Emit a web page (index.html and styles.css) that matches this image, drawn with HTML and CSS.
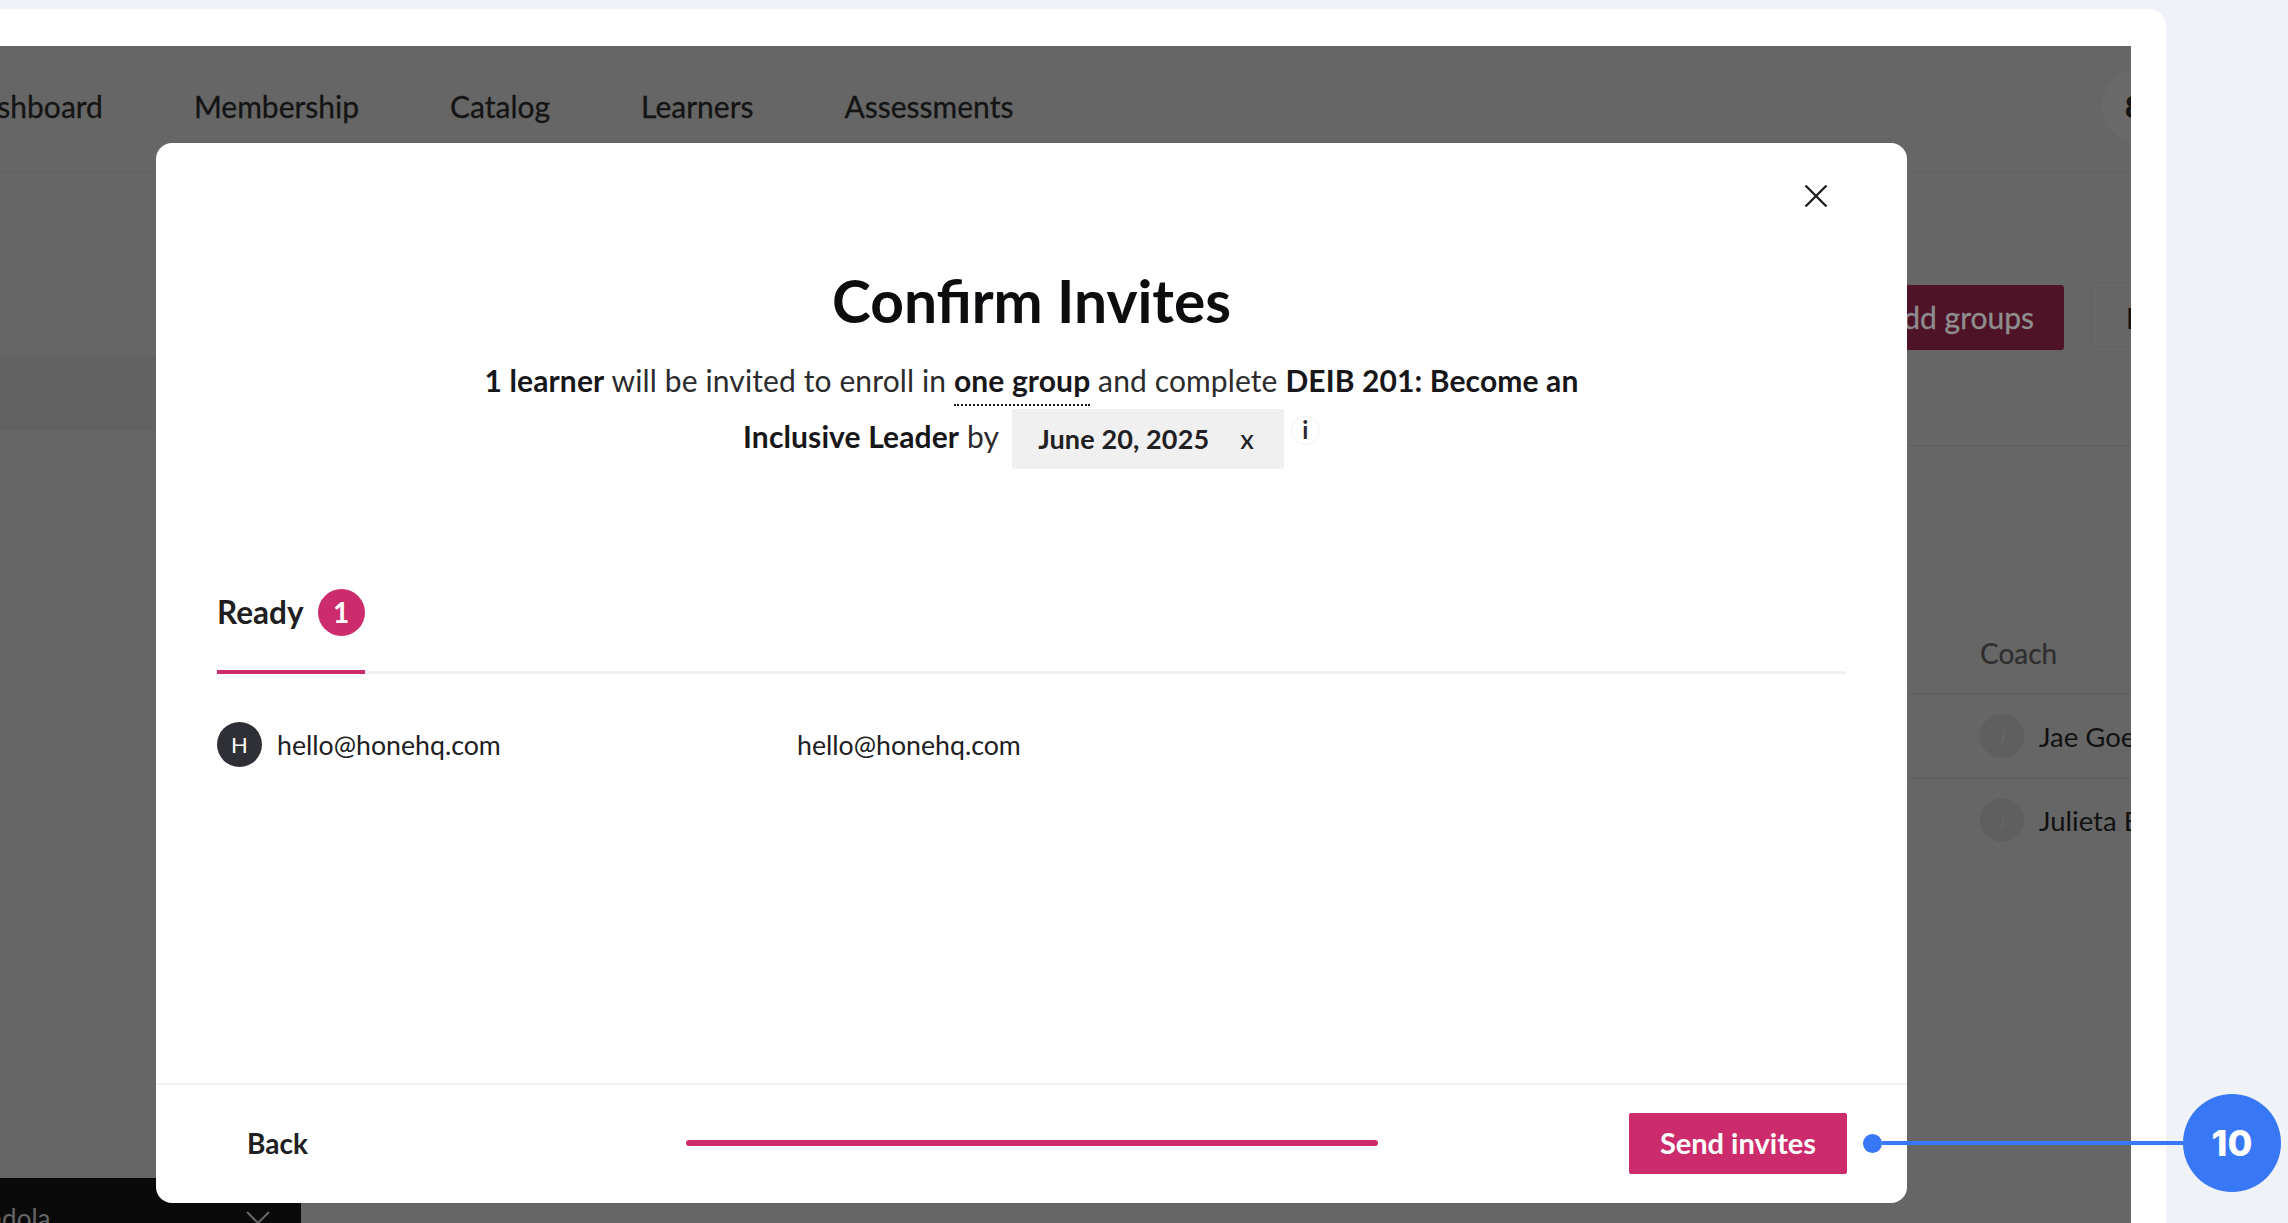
FILE: index.html
```html
<!DOCTYPE html>
<html lang="en">
<head>
    <meta charset="UTF-8">
    <meta name="viewport" content="width=device-width, initial-scale=1.0">
    <title>Confirm Invites</title>
    <link rel="stylesheet" href="styles.css">
</head>
<body>
    <div class="frame">
        <div class="screen">
            <nav class="nav">
                <a class="nav-link">Dashboard</a>
                <a class="nav-link">Membership</a>
                <a class="nav-link">Catalog</a>
                <a class="nav-link">Learners</a>
                <a class="nav-link">Assessments</a>
                <div class="nav-user"><span class="nav-user-mark">8</span></div>
            </nav>
            <div class="page">
                <aside class="sidebar">
                    <div class="sidebar-band"></div>
                    <div class="org-select">
                        <span class="org-name">Gondola</span>
                        <svg class="org-chevron" width="24" height="14" viewBox="0 0 24 14"><path d="M1 1l11 11L23 1" fill="none" stroke="#666" stroke-width="2"/></svg>
                    </div>
                </aside>
                <main class="main">
                    <div class="toolbar">
                        <div class="btn-add">Add groups</div>
                        <div class="btn-more">Export</div>
                    </div>
                    <div class="table">
                        <div class="table-head"><div class="coach-cell coach-title">Coach</div></div>
                        <div class="table-row">
                            <div class="coach-cell"><span class="coach-avatar">J</span>Jae Goetz</div>
                        </div>
                        <div class="table-row no-line">
                            <div class="coach-cell"><span class="coach-avatar">J</span>Julieta Bravo</div>
                        </div>
                    </div>
                </main>
            </div>

            <div class="modal">
                <button class="modal-close">
                    <svg width="24" height="24" viewBox="0 0 24 24"><path d="M1.5 1.5l21 21M22.5 1.5l-21 21" fill="none" stroke="#1f1f22" stroke-width="2.4"/></svg>
                </button>
                <div class="modal-body">
                    <h1 class="modal-title">Confirm Invites</h1>
                    <p class="modal-text">
                        <b>1 learner</b> will be invited to enroll in <b class="dotted">one group</b> and complete <b>DEIB 201: Become an Inclusive Leader</b> by
                        <span class="date-chip">June 20, 2025<span class="date-clear">x</span></span><span class="info-dot">i</span>
                    </p>
                    <div class="tabs">
                        <div class="tab-active">Ready <span class="tab-badge">1</span></div>
                    </div>
                    <div class="invite-row">
                        <div class="invite-name"><span class="invite-avatar">H</span>hello@honehq.com</div>
                        <div>hello@honehq.com</div>
                    </div>
                </div>
                <div class="modal-footer">
                    <div class="back-link">Back</div>
                    <div class="progress"></div>
                    <div class="send-btn">Send invites</div>
                </div>
            </div>
        </div>
    </div>

    <div class="callout">
        <span class="callout-dot"></span>
        <span class="callout-line"></span>
        <span class="callout-num">10</span>
    </div>
</body>
</html>
```

FILE: styles.css
```css
* {
    box-sizing: border-box;
}

html, body {
    height: 100%;
}

body {
    margin: 0;
    overflow: hidden;
    background-color: #eff2f8;
    font-family: Lato, "Open Sans", sans-serif;
    color: #1f1f22;
}

.frame {
    width: 2166px;
    height: 1214px;
    margin-top: 9px;
    padding: 37px 35px 0 0;
    background-color: #fff;
    border-top-right-radius: 18px;
}

.screen {
    position: relative;
    display: flex;
    flex-direction: column;
    height: 100%;
    background-color: #666;
    overflow: hidden;
}

/* top nav */
.nav {
    display: flex;
    align-items: center;
    flex-shrink: 0;
    height: 126px;
    margin-left: -40px;
    padding-bottom: 5px;
    gap: 91px;
    border-bottom: 1px solid #616161;
    font-size: 30px;
    -webkit-text-stroke: 0.3px #141414;
    color: #141414;
}

.nav-user {
    display: flex;
    align-items: center;
    width: 76px;
    height: 76px;
    margin-left: auto;
    margin-right: -47px;
    padding-left: 23px;
    border-radius: 50%;
    background-color: #6a6a6a;
    font-weight: 900;
}

.page {
    display: flex;
    flex: 1;
    min-height: 0;
}

.sidebar {
    display: flex;
    flex-direction: column;
    width: 301px;
    flex-shrink: 0;
    padding-top: 183px;
}

.sidebar-band {
    height: 75px;
    background-color: #626262;
}

.org-select {
    display: flex;
    align-items: center;
    justify-content: space-between;
    height: 80px;
    margin-top: auto;
    margin-bottom: -35px;
    margin-left: -46px;
    padding: 0 31px 0 0;
    background-color: #0a0a0b;
    font-size: 26px;
    color: #666;
}

.main {
    flex: 1;
    min-width: 0;
}

.toolbar {
    display: flex;
    justify-content: flex-end;
    gap: 31px;
    height: 274px;
    margin-right: -64px;
    padding-top: 113px;
    border-bottom: 1px solid #5e5e5e;
}

.btn-add {
    width: 260px;
    height: 65px;
    padding-top: 14px;
    text-align: right;
    padding-right: 30px;
    border-radius: 3px;
    background-color: #4f1328;
    color: #8e8e8e;
    font-size: 30px;
    -webkit-text-stroke: 0.3px #8e8e8e;
}

.btn-more {
    width: 100px;
    height: 65px;
    padding: 15px 0 0 30px;
    border: 1px solid #6b6b6b;
    border-radius: 3px;
    color: #111;
    font-size: 28px;
    font-weight: 500;
}

.table-head {
    display: flex;
    justify-content: flex-end;
    align-items: flex-end;
    height: 249px;
    padding-bottom: 23px;
    border-bottom: 2px solid #616161;
}

.table-row {
    display: flex;
    justify-content: flex-end;
    align-items: center;
    height: 84px;
    border-bottom: 2px solid #616161;
    font-size: 27.5px;
    color: #111;
}

.table-row.no-line {
    height: 82px;
    border-bottom: 0;
}

.coach-cell {
    display: flex;
    align-items: center;
    width: 151px;
    overflow: hidden;
    white-space: nowrap;
}

.coach-title {
    font-size: 28px;
    color: #2e2e2e;
    -webkit-text-stroke: 0.2px #2e2e2e;
}

.coach-avatar {
    display: flex;
    align-items: center;
    justify-content: center;
    flex-shrink: 0;
    width: 44px;
    height: 44px;
    margin-right: 15px;
    border-radius: 50%;
    background-color: #5f5f5f;
    color: #666;
    font-size: 16px;
}

/* modal */
.modal {
    position: absolute;
    left: 156px;
    top: 97px;
    display: flex;
    flex-direction: column;
    width: 1751px;
    height: 1060px;
    border-radius: 16px;
    background-color: #fff;
}

.modal-close {
    position: absolute;
    top: 41px;
    right: 79px;
    width: 24px;
    height: 24px;
    padding: 0;
    border: 0;
    background: none;
}

.modal-close svg {
    display: block;
}

.modal-body {
    flex: 1;
    padding: 120px 61px 0;
}

.modal-title {
    margin: 0;
    font-size: 58.7px;
    line-height: 76px;
    font-weight: 700;
    color: #0d0d0f;
    text-align: center;
}

.modal-text {
    width: 1140px;
    margin: 13px auto 0;
    font-size: 30px;
    line-height: 56px;
    letter-spacing: 0.12px;
    text-align: center;
    color: #2b2b2e;
}

.modal-text b {
    font-weight: 700;
    color: #17171a;
}

.dotted {
    padding-bottom: 6px;
    border-bottom: 2px dotted #17171a;
}

.date-chip {
    display: inline-block;
    height: 60px;
    margin: -3px 0 -1px 6px;
    padding: 0 30px 0 26px;
    border-radius: 3px;
    background-color: #f0f0f0;
    font-size: 27px;
    line-height: 60px;
    font-weight: 700;
    color: #202023;
    vertical-align: middle;
}

.date-clear {
    margin-left: 31px;
    font-weight: 500;
}

.info-dot {
    display: inline-block;
    width: 29px;
    height: 29px;
    margin-left: 7px;
    border: 1px solid #f0f0f0;
    border-radius: 50%;
    font-size: 24px;
    line-height: 25px;
    font-weight: 700;
    text-align: center;
    vertical-align: 9px;
}

.tabs {
    height: 111px;
    margin-top: 95px;
    border-bottom: 3px solid #f0f0f0;
}

.tab-active {
    display: inline-flex;
    align-items: center;
    gap: 14px;
    height: 111px;
    padding-bottom: 9px;
    border-bottom: 4px solid #cc2c6c;
    font-size: 31.5px;
    font-weight: 700;
}

.tab-badge {
    display: flex;
    align-items: center;
    justify-content: center;
    width: 47px;
    height: 47px;
    border-radius: 50%;
    background-color: #cc2c6c;
    color: #fff;
    font-size: 28px;
}

.invite-row {
    display: flex;
    align-items: center;
    height: 45px;
    margin-top: 48px;
    font-size: 26.7px;
    color: #202023;
}

.invite-name {
    display: flex;
    align-items: center;
    gap: 15px;
    width: 580px;
}

.invite-avatar {
    display: flex;
    align-items: center;
    justify-content: center;
    width: 45px;
    height: 45px;
    border-radius: 50%;
    background-color: #2f2f36;
    color: #fff;
    font-size: 22px;
}

.modal-footer {
    display: grid;
    grid-template-columns: 1fr 692px 1fr;
    align-items: center;
    flex-shrink: 0;
    height: 120px;
    padding: 0 60px 2px 61px;
    border-top: 2px solid #f3f3f3;
}

.back-link {
    padding-left: 30px;
    font-size: 28px;
    font-weight: 700;
    color: #202023;
}

.progress {
    height: 6px;
    border-radius: 3px;
    background-color: #cc2c6c;
}

.send-btn {
    justify-self: end;
    width: 218px;
    height: 61px;
    border-radius: 2px;
    background-color: #cc2c6c;
    color: #fff;
    font-size: 29px;
    font-weight: 700;
    line-height: 59px;
    text-align: center;
}

/* annotation over the screenshot */
.callout {
    position: absolute;
    left: 1863px;
    top: 1094px;
    display: flex;
    align-items: center;
    width: 418px;
    height: 98px;
}

.callout-dot {
    flex-shrink: 0;
    width: 19px;
    height: 19px;
    border-radius: 50%;
    background-color: #3878f6;
}

.callout-line {
    flex: 1;
    height: 4px;
    background-color: #3878f6;
}

.callout-num {
    display: flex;
    align-items: center;
    justify-content: center;
    flex-shrink: 0;
    width: 98px;
    height: 98px;
    border-radius: 50%;
    background-color: #3878f6;
    color: #fff;
    font-family: Inter, sans-serif;
    font-size: 36px;
    font-weight: 800;
}
```
